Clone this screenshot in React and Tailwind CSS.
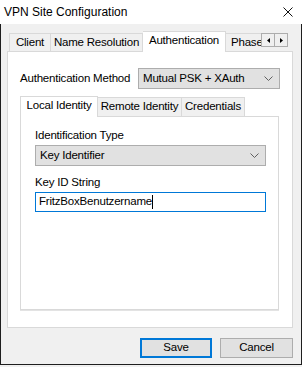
import React from 'react';

const font = { fontFamily: '"Liberation Sans", Arial, sans-serif' };

function Chevron() {
  return (
    <svg width="9" height="5" viewBox="0 0 9 5" className="shrink-0">
      <path d="M0.5 0.5 L4.5 4.5 L8.5 0.5" fill="none" stroke="#606060" strokeWidth="1" />
    </svg>
  );
}

function Select({ value, className }) {
  return (
    <div
      className={`flex items-center justify-between h-[21px] bg-[#e1e1e1] border border-[#adadad] pl-[4px] pr-[6px] text-black whitespace-nowrap ${className}`}
    >
      <span>{value}</span>
      <Chevron />
    </div>
  );
}

export default function App() {
  return (
    <div style={font} className="w-[302px] h-[367px] bg-[#f0f0f0] flex flex-col text-[11.5px] tracking-[-0.2px] text-black overflow-hidden whitespace-nowrap">
      {/* title bar */}
      <div className="h-[24px] bg-white flex items-center justify-between pl-[4px] pr-[9px] shrink-0">
        <span className="text-[12px] tracking-normal">VPN Site Configuration</span>
        <svg width="10" height="10" viewBox="0 0 10 10">
          <path d="M0.5 0.5 L9.5 9.5 M9.5 0.5 L0.5 9.5" stroke="#111" strokeWidth="1" />
        </svg>
      </div>

      {/* window body */}
      <div className="flex-1 flex flex-col border-x border-b border-[#1e1e1e] mb-[2px] pl-[6px] pr-[8px] pt-[7px]">
        {/* tabs */}
        <div className="flex items-end h-[20px] relative z-10">
          <div className="w-[2px]" />
          <div className="h-[18px] w-[42px] border border-b-0 border-[#d9d9d9] bg-[#f0f0f0] flex items-center justify-center">
            Client
          </div>
          <div className="h-[18px] w-[92px] border border-l-0 border-b-0 border-[#d9d9d9] bg-[#f0f0f0] flex items-center justify-center">
            Name Resolution
          </div>
          <div className="h-[21px] -mb-px w-[83px] border border-l-0 border-b-0 border-[#d9d9d9] bg-white flex items-center justify-center pb-[3px]">
            Authentication
          </div>
          <div className="h-[18px] w-[35px] border-t border-[#d9d9d9] bg-[#f0f0f0] flex items-center pl-[5px] overflow-hidden">
            Phase
          </div>
          <div className="flex self-start mt-[2px] h-[14px]">
            <div className="w-[14px] h-[14px] border border-[#adadad] bg-[#f0f0f0] flex items-center justify-center">
              <svg width="3" height="5" viewBox="0 0 3 5"><path d="M3 0 L0 2.5 L3 5 Z" fill="#000" /></svg>
            </div>
            <div className="w-[13px] h-[14px] border border-l-0 border-[#adadad] bg-[#f0f0f0] flex items-center justify-center">
              <svg width="3" height="5" viewBox="0 0 3 5"><path d="M0 0 L3 2.5 L0 5 Z" fill="#000" /></svg>
            </div>
          </div>
        </div>

        {/* main panel */}
        <div className="h-[277px] bg-white border border-[#d9d9d9] flex flex-col pl-[12px] pr-[12px] pt-[16px]">
          <div className="flex items-center justify-between h-[21px]">
            <span>Authentication Method</span>
            <Select value="Mutual PSK + XAuth" className="w-[142px]" />
          </div>

          {/* inner tabs */}
          <div className="flex items-end h-[20px] mt-[7px] relative z-10">
            <div className="h-[21px] -mb-px w-[78px] border border-b-0 border-[#d9d9d9] bg-white flex items-center justify-center pb-[3px]">
              Local Identity
            </div>
            <div className="h-[19px] w-[84px] border border-l-0 border-b-0 border-[#d9d9d9] bg-[#f0f0f0] flex items-center justify-center">
              Remote Identity
            </div>
            <div className="h-[19px] w-[63px] border border-l-0 border-b-0 border-[#d9d9d9] bg-[#f0f0f0] flex items-center justify-center">
              Credentials
            </div>
          </div>

          <div className="h-[194px] mr-[1px] bg-white border border-[#d9d9d9] shadow-[0_1px_0_#e3e3e3] flex flex-col pl-[14px] pr-[11px] pt-[11px]">
            <span className="leading-[15px]">Identification Type</span>
            <Select value="Key Identifier" className="mt-[2px] w-[231px]" />
            <span className="leading-[15px] mt-[9px]">Key ID String</span>
            <div className="mt-[2px] w-[231px] h-[20px] border border-[#0078d7] bg-white flex items-center pl-[3px]">
              <span>FritzBoxBenutzername</span>
              <span className="w-px h-[14px] bg-black" />
            </div>
          </div>
        </div>

        {/* buttons */}
        <div className="flex justify-end gap-[8px] mt-[10px]">
          <button className="w-[72px] h-[20px] border-2 border-[#0078d7] bg-[#e1e1e1] flex items-center justify-center">
            Save
          </button>
          <button className="w-[73px] h-[20px] border border-[#adadad] bg-[#e1e1e1] flex items-center justify-center">
            Cancel
          </button>
        </div>
      </div>
    </div>
  );
}
